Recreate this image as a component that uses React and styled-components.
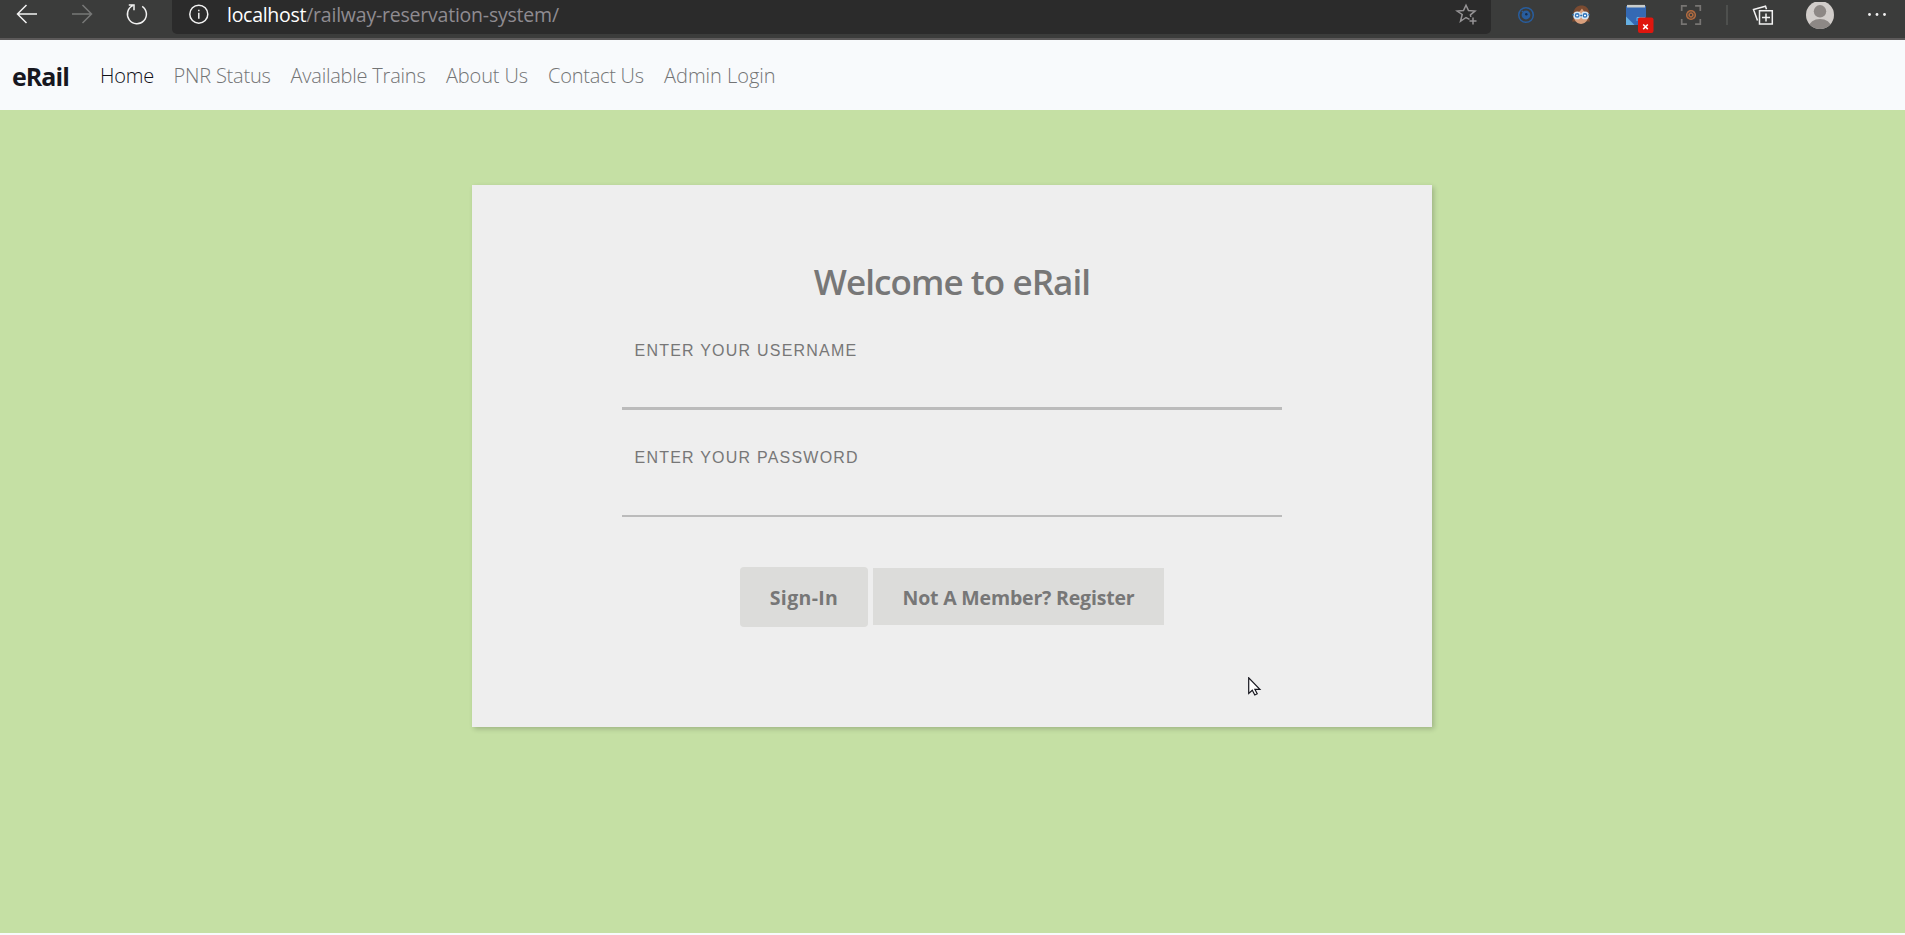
import React from "react";
import styled, { createGlobalStyle } from "styled-components";

const GlobalStyle = createGlobalStyle`
  * { box-sizing: border-box; }
  html, body { margin: 0; padding: 0; background: #f8fafc; overflow: hidden; }
  body { font-family: "Open Sans", "Noto Sans", sans-serif; }
`;

const Page = styled.div`
  display: flex;
  flex-direction: column;
  width: 1905px;
  height: 935px;
`;

const BrowserBar = styled.header`
  display: flex;
  align-items: flex-start;
  height: 40px;
  background: #3b3c3b;
  border-bottom: 2px solid #5c5a5a;
`;

const Controls = styled.div`
  display: flex;
  width: 172px;
  padding: 2px 0 0 15px;
  gap: 31px;
`;

const Glyph = styled.svg`
  display: block;
  flex: none;
  width: ${(p) => p.$w || 24}px;
  height: ${(p) => p.$h || 24}px;
  margin-left: ${(p) => p.$gap || 0}px;
  fill: none;
  stroke: ${(p) => p.$color || "#f2f2f2"};
  stroke-width: 1.5;
`;

const Address = styled.div`
  display: flex;
  width: 1319px;
  height: 34px;
  padding: 2px 12px 0 14px;
  background: #2b2b2b;
  border-radius: 0 0 5px 5px;
`;

const Url = styled.div`
  flex: 1;
  margin-left: 16px;
  font-size: 19.5px;
  line-height: 26px;
  letter-spacing: -0.22px;
  color: #8f8b91;
  white-space: nowrap;
`;

const Host = styled.span`
  color: #fff;
  letter-spacing: -0.28px;
`;

const Extensions = styled.div`
  display: flex;
  flex: 1;
  padding-top: 2px;
`;

const Navbar = styled.nav`
  display: flex;
  align-items: center;
  height: 70px;
  padding-left: 12px;
  background: #f8fafc;
`;

const Brand = styled.a`
  width: 88px;
  padding-top: 2px;
  font-size: 25px;
  font-weight: 700;
  line-height: 36px;
  letter-spacing: -0.95px;
  color: #17171f;
`;

const NavLink = styled.a`
  flex: none;
  width: ${(p) => p.$w}px;
  padding-top: 2px;
  font-size: 20px;
  font-weight: 340;
  line-height: 30px;
  letter-spacing: ${(p) => p.$ls}px;
  color: ${(p) => (p.$active ? "#101018" : "#737475")};
  white-space: nowrap;
`;

const Main = styled.main`
  position: relative;
  height: 823px;
  padding-top: 75px;
  background: #c5e0a4;
`;

const Card = styled.form`
  display: flex;
  flex-direction: column;
  align-items: center;
  width: 960px;
  height: 542px;
  margin: 0 0 0 472px;
  padding-top: 75px;
  background: #eee;
  box-shadow: 2px 2px 5px rgba(0, 0, 0, 0.2);
`;

const Title = styled.h1`
  margin: 0;
  font-size: 35px;
  font-weight: 600;
  line-height: 44px;
  letter-spacing: -0.92px;
  color: #777;
  white-space: nowrap;
`;

const Field = styled.label`
  display: flex;
  flex-direction: column;
  width: 660px;
  height: ${(p) => p.$h}px;
  margin-top: ${(p) => p.$gap}px;
  border-bottom: ${(p) => p.$line}px solid #bbb;
`;

const Label = styled.span`
  padding: 1px 0 0 12.500px;
  font-family: "Liberation Sans", Arial, sans-serif;
  font-size: 16px;
  line-height: 24px;
  letter-spacing: 1.22px;
  color: #777;
`;

const Actions = styled.div`
  display: flex;
  align-items: flex-start;
  gap: 5px;
  margin-top: 50px;
`;

const Button = styled.button`
  width: ${(p) => p.$w}px;
  height: ${(p) => p.$h}px;
  margin-top: ${(p) => p.$top || 0}px;
  padding: 2px 0 0;
  border: 0;
  border-radius: ${(p) => p.$radius || 0}px;
  background: #dcdcda;
  font: 700 19.5px/28px "Open Sans", "Noto Sans", sans-serif;
  letter-spacing: ${(p) => p.$ls}px;
  color: #777;
  white-space: nowrap;
`;

const Pointer = styled.svg`
  position: absolute;
  left: 1248px;
  top: 567px;
  width: 14px;
  height: 20px;
`;

const links = [
  { text: "Home", w: 73.5, ls: -0.2, active: true },
  { text: "PNR Status", w: 117, ls: -0.2 },
  { text: "Available Trains", w: 155.5, ls: -0.22 },
  { text: "About Us", w: 102, ls: -0.15 },
  { text: "Contact Us", w: 116, ls: -0.25 },
  { text: "Admin Login", w: 120, ls: -0.02 },
];

export default function App() {
  return (
    <Page>
      <GlobalStyle />
      <BrowserBar>
        <Controls>
          <Glyph viewBox="0 0 24 24">
            <path d="M22 12H3M11.500 3L2.500 12l9 9" />
          </Glyph>
          <Glyph viewBox="0 0 24 24" $color="#777877">
            <path d="M2 12h19M12.500 3l9 9-9 9" />
          </Glyph>
          <Glyph viewBox="0 0 24 24">
            <path d="M17.200 4.300A9.500 9.500 0 1 1 7.700 3.700M3.800 3H9v5.200" />
          </Glyph>
        </Controls>
        <Address>
          <Glyph viewBox="0 0 24 24" $w={25}>
            <circle cx="12.300" cy="12.200" r="9" />
            <path d="M12.300 10.700v6M12.300 7.700v1.600" />
          </Glyph>
          <Url>
            <Host>localhost</Host>/railway-reservation-system/
          </Url>
          <Glyph viewBox="0 0 24 24" $color="#969496">
            <path d="M14.500 17.300L11 15.500l-5.500 3.800 1.700-6.800L2 9l6.500-.5L11 3.200l2.500 5.300L20 9l-4.600 3.800.4 2M18 15.500v7M14.500 19h7" />
          </Glyph>
        </Address>
        <Extensions>
          <Glyph viewBox="0 0 24 24" $gap={23} $color="#285d9d">
            <circle cx="12" cy="13" r="7.300" />
            <circle cx="12" cy="13" r="4.400" fill="#285d9d" stroke="none" />
            <path d="M9 10l-1-1" />
            <circle cx="12.300" cy="12.300" r="1.200" fill="#172d4c" stroke="none" />
          </Glyph>
          <Glyph viewBox="0 0 24 24" $gap={31}>
            <path d="M3 19.500c1.500-2 1-5 1.300-8C5 6 8.500 3.500 12.500 3.500S20 6 20.200 11.500c.2 3-.5 6 .8 8z" fill="#7b4b31" stroke="none" />
            <path d="M5.500 12Q11 10 13 6.500q2 4 5.500 5v6q-2 4-6.500 4.500-4.500-.5-6.500-4.500z" fill="#d99f7c" stroke="none" />
            <circle cx="8.200" cy="13.400" r="3.200" fill="#2f72b8" stroke="#d5e8f6" />
            <circle cx="16" cy="13.400" r="3.200" fill="#2f72b8" stroke="#d5e8f6" />
            <path d="M3.300 12.800h1.500M11.200 13.400H13M19.300 12.800h1.500" stroke="#286caa" />
            <path d="M7.200 13.400h2M15 13.400h2" stroke="#fff" />
          </Glyph>
          <Glyph viewBox="0 0 28 32" $w={28} $h={32} $gap={33}>
            <path d="M0 4h20v19H0z" fill="#3469b4" stroke="none" />
            <path d="M1 4.200h18" stroke="#c9cdcb" strokeWidth="2.600" />
            <path d="M0 14.500l8.500 8.500H0z" fill="#65afe2" stroke="none" />
            <path d="M11 19v-3.500h8" stroke="#65afe2" strokeWidth="1" />
            <rect x="12" y="15.500" width="15.500" height="15.500" rx="2" fill="#df160e" stroke="none" />
            <path d="M17.200 22.500l4.600 4.600M21.800 22.500l-4.600 4.600" stroke="#fff" />
          </Glyph>
          <Glyph viewBox="0 0 24 24" $gap={25} $color="#777573">
            <path d="M2.700 9V3.800h5.200M16.100 3.800h5.200V9M2.700 17v5.200h5.200M16.100 22.200h5.200V17" strokeWidth="1.700" />
            <circle cx="12" cy="13" r="4.300" stroke="#b46d40" />
            <circle cx="12" cy="13" r="1.900" stroke="#b46d40" />
            <path d="M8.500 9.500l2 2M15.500 9.500l-2 2M8.500 16.500l2-2M15.500 16.500l-2-2" stroke="#8e5a3b" strokeWidth="1" />
          </Glyph>
          <Glyph viewBox="0 0 2 24" $w={2} $gap={22.5} $color="#626462">
            <path d="M1 3v20" strokeWidth="1" />
          </Glyph>
          <Glyph viewBox="0 0 24 24" $gap={23}>
            <path d="M8.500 8.800h12.800v13.300H8.500zM15 11.500v8M11 15.500h8" />
            <path d="M6.500 18.500L2.500 7.500l12-3.300 1 3" />
          </Glyph>
          <Glyph viewBox="0 0 28 30" $w={28} $h={30} $gap={31.5}>
            <defs>
              <clipPath id="avatar"><circle cx="14" cy="13" r="14" /></clipPath>
            </defs>
            <g clipPath="url(#avatar)" stroke="none">
              <path d="M0-1h28v28H0z" fill="#d1cdca" />
              <circle cx="14" cy="9.300" r="6.200" fill="#8d8885" />
              <ellipse cx="14" cy="25" rx="11" ry="8" fill="#8d8885" />
            </g>
          </Glyph>
          <Glyph viewBox="0 0 24 24" $gap={31}>
            <g fill="#f2f2f2" stroke="none">
              <circle cx="4.500" cy="12.500" r="1.400" />
              <circle cx="12" cy="12.500" r="1.400" />
              <circle cx="19.500" cy="12.500" r="1.400" />
            </g>
          </Glyph>
        </Extensions>
      </BrowserBar>
      <Navbar>
        <Brand>eRail</Brand>
        {links.map((l) => (
          <NavLink key={l.text} $w={l.w} $ls={l.ls} $active={l.active}>{l.text}</NavLink>
        ))}
      </Navbar>
      <Main>
        <Card>
          <Title>Welcome to eRail</Title>
          <Field $gap={34} $h={72} $line={3}><Label>ENTER YOUR USERNAME</Label></Field>
          <Field $gap={35} $h={72} $line={2}><Label>ENTER YOUR PASSWORD</Label></Field>
          <Actions>
            <Button type="button" $w={128} $h={60} $radius={4} $ls={0.35}>Sign-In</Button>
            <Button type="button" $w={291} $h={57} $top={1} $ls={-0.18}>Not A Member? Register</Button>
          </Actions>
        </Card>
        <Pointer viewBox="0 0 14 20">
          <path d="M.7.800v15.700l3.600-3.300 2.500 4.800 2.400-1.300-2.300-4.300h5z" fill="#fff" stroke="#17171f" strokeWidth="1.200" />
        </Pointer>
      </Main>
    </Page>
  );
}
